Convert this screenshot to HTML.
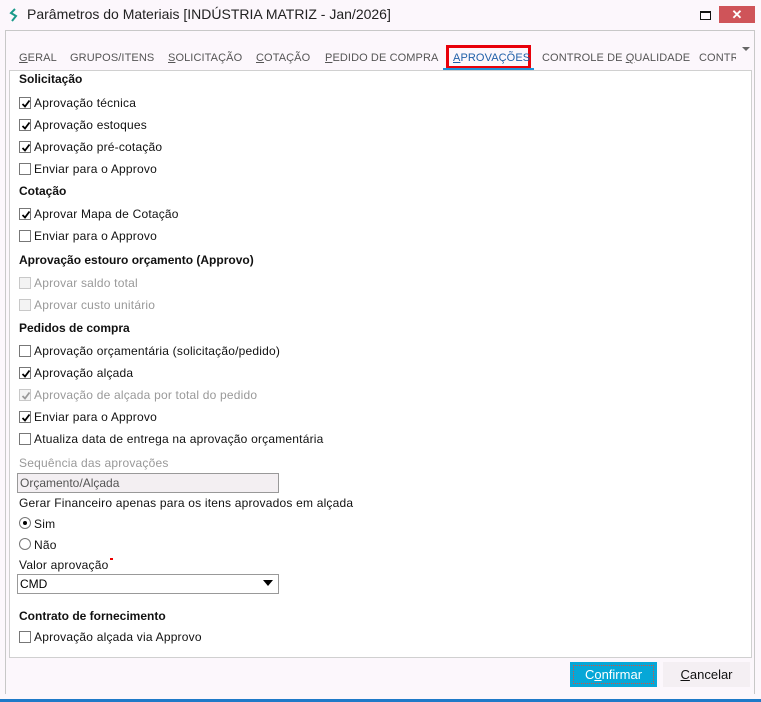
<!DOCTYPE html>
<html><head><meta charset="utf-8"><style>
*{margin:0;padding:0;box-sizing:border-box}
body{width:761px;height:702px;background:#fcf7fc;font-family:"Segoe UI","Liberation Sans",sans-serif;font-size:12px;color:#111;position:relative;overflow:hidden}
.a{position:absolute;white-space:nowrap}
.h{font-weight:bold}
.cb{position:absolute;left:19px;width:12px;height:12px;border:1px solid #777;background:#fff}
.cb.dis{border-color:#c8c8c8;background:#f3f3f3}
.cb svg{position:absolute;left:1px;top:1px}
.lbl{position:absolute;left:34px;white-space:nowrap;margin-top:1px;letter-spacing:0.2px}
.g{color:#999}
.tab{position:absolute;top:52px;color:#555;font-size:11px;letter-spacing:0.1px}
.tab u{text-decoration:underline}
</style></head><body>
<svg class="a" style="left:9px;top:8px" width="10" height="14" viewBox="0 0 10 14"><path d="M6 1 L2 5 L7 8 L3 13" fill="none" stroke="#1a9a8a" stroke-width="2"/></svg>
<div class="a" style="left:27px;top:6px;font-size:14px;color:#222">Parâmetros do Materiais [INDÚSTRIA MATRIZ - Jan/2026]</div>
<div class="a" style="left:700px;top:11px;width:11px;height:9px;border:1px solid #111;border-top-width:2px"></div>
<div class="a" style="left:719px;top:6px;width:36px;height:17px;background:#cf5459;color:#fff;text-align:center;font-size:13px;font-weight:bold;line-height:17px">✕</div>
<div class="a" style="left:5px;top:30px;width:750px;height:664px;border:1px solid #c8c8c8;border-bottom:none"></div>
<div class="tab" style="left:19px"><u>G</u>ERAL</div>
<div class="tab" style="left:70px">GRUPOS/ITENS</div>
<div class="tab" style="left:168px"><u>S</u>OLICITAÇÃO</div>
<div class="tab" style="left:256px"><u>C</u>OTAÇÃO</div>
<div class="tab" style="left:325px"><u>P</u>EDIDO DE COMPRA</div>
<div class="a" style="left:446px;top:45px;width:85px;height:24px;border:3px solid #e8000a"></div>
<div class="tab" style="left:453px;color:#1f5fa8"><u>A</u>PROVAÇÕES</div>
<div class="a" style="left:443px;top:68px;width:91px;height:2px;background:#1e90d8"></div>
<div class="tab" style="left:542px">CONTROLE DE <u>Q</u>UALIDADE</div>
<div class="tab" style="left:699px;width:37px;overflow:hidden">CONTRO</div>
<div class="a" style="left:742px;top:47px;width:0;height:0;border-left:4px solid transparent;border-right:4px solid transparent;border-top:4px solid #666"></div>
<div class="a" style="left:9px;top:70px;width:743px;height:588px;background:#fff;border:1px solid #d0d0d0"></div>

<div class="a h" style="left:19px;top:72px">Solicitação</div>
<div class="cb" style="top:97px"><svg width="10" height="10"><path d="M1.5 5 L4 7.5 L8.5 1.5" stroke="#000" stroke-width="1.8" fill="none"/></svg></div><div class="lbl" style="top:95px">Aprovação técnica</div>
<div class="cb" style="top:119px"><svg width="10" height="10"><path d="M1.5 5 L4 7.5 L8.5 1.5" stroke="#000" stroke-width="1.8" fill="none"/></svg></div><div class="lbl" style="top:117px">Aprovação estoques</div>
<div class="cb" style="top:141px"><svg width="10" height="10"><path d="M1.5 5 L4 7.5 L8.5 1.5" stroke="#000" stroke-width="1.8" fill="none"/></svg></div><div class="lbl" style="top:139px">Aprovação pré-cotação</div>
<div class="cb" style="top:163px"></div><div class="lbl" style="top:161px">Enviar para o Approvo</div>
<div class="a h" style="left:19px;top:184px">Cotação</div>
<div class="cb" style="top:208px"><svg width="10" height="10"><path d="M1.5 5 L4 7.5 L8.5 1.5" stroke="#000" stroke-width="1.8" fill="none"/></svg></div><div class="lbl" style="top:206px">Aprovar Mapa de Cotação</div>
<div class="cb" style="top:230px"></div><div class="lbl" style="top:228px">Enviar para o Approvo</div>
<div class="a h" style="left:19px;top:253px">Aprovação estouro orçamento (Approvo)</div>
<div class="cb dis" style="top:277px"></div><div class="lbl g" style="top:275px">Aprovar saldo total</div>
<div class="cb dis" style="top:299px"></div><div class="lbl g" style="top:297px">Aprovar custo unitário</div>
<div class="a h" style="left:19px;top:321px">Pedidos de compra</div>
<div class="cb" style="top:345px"></div><div class="lbl" style="top:343px">Aprovação orçamentária (solicitação/pedido)</div>
<div class="cb" style="top:367px"><svg width="10" height="10"><path d="M1.5 5 L4 7.5 L8.5 1.5" stroke="#000" stroke-width="1.8" fill="none"/></svg></div><div class="lbl" style="top:365px">Aprovação alçada</div>
<div class="cb dis" style="top:389px"><svg width="10" height="10"><path d="M1.5 5 L4 7.5 L8.5 1.5" stroke="#999" stroke-width="1.8" fill="none"/></svg></div><div class="lbl g" style="top:387px">Aprovação de alçada por total do pedido</div>
<div class="cb" style="top:411px"><svg width="10" height="10"><path d="M1.5 5 L4 7.5 L8.5 1.5" stroke="#000" stroke-width="1.8" fill="none"/></svg></div><div class="lbl" style="top:409px">Enviar para o Approvo</div>
<div class="cb" style="top:433px"></div><div class="lbl" style="top:431px">Atualiza data de entrega na aprovação orçamentária</div>
<div class="a g" style="left:19px;top:456px;letter-spacing:0.2px">Sequência das aprovações</div>
<div class="a" style="left:17px;top:473px;width:262px;height:20px;border:1px solid #999;background:#f3eff2;padding-left:2px;line-height:18px;color:#555">Orçamento/Alçada</div>
<div class="a" style="left:19px;top:496px;letter-spacing:0.2px">Gerar Financeiro apenas para os itens aprovados em alçada</div>
<div class="a" style="left:19px;top:517px;width:12px;height:12px;border:1px solid #777;border-radius:50%;background:#fff"><div style="position:absolute;left:3px;top:3px;width:4px;height:4px;border-radius:50%;background:#000"></div></div>
<div class="lbl" style="top:516px">Sim</div>
<div class="a" style="left:19px;top:538px;width:12px;height:12px;border:1px solid #777;border-radius:50%;background:#fff"></div>
<div class="lbl" style="top:537px">Não</div>
<div class="a" style="left:19px;top:558px;letter-spacing:0.2px">Valor aprovação</div>
<div class="a" style="left:110px;top:558px;width:3px;height:2px;background:#e00"></div>
<div class="a" style="left:17px;top:574px;width:262px;height:20px;border:1px solid #999;background:#fff;padding-left:2px;line-height:18px;color:#000">CMD</div>
<div class="a" style="left:263px;top:580px;width:0;height:0;border-left:5px solid transparent;border-right:5px solid transparent;border-top:6px solid #000"></div>
<div class="a h" style="left:19px;top:609px">Contrato de fornecimento</div>
<div class="cb" style="top:631px"></div><div class="lbl" style="top:629px">Aprovação alçada via Approvo</div>

<div class="a" style="left:570px;top:662px;width:87px;height:25px;background:#06a7d7;color:#fff;text-align:center;line-height:25px;font-size:13px"><div style="position:absolute;left:3px;top:3px;right:3px;bottom:3px;border:1px dotted #d9503f"></div>C<u>o</u>nfirmar</div>
<div class="a" style="left:663px;top:662px;width:87px;height:25px;background:#f4eff3;color:#111;text-align:center;line-height:25px;font-size:13px"><u>C</u>ancelar</div>
<div class="a" style="left:0;top:699px;width:761px;height:3px;background:#1e7ac8"></div>
</body></html>
